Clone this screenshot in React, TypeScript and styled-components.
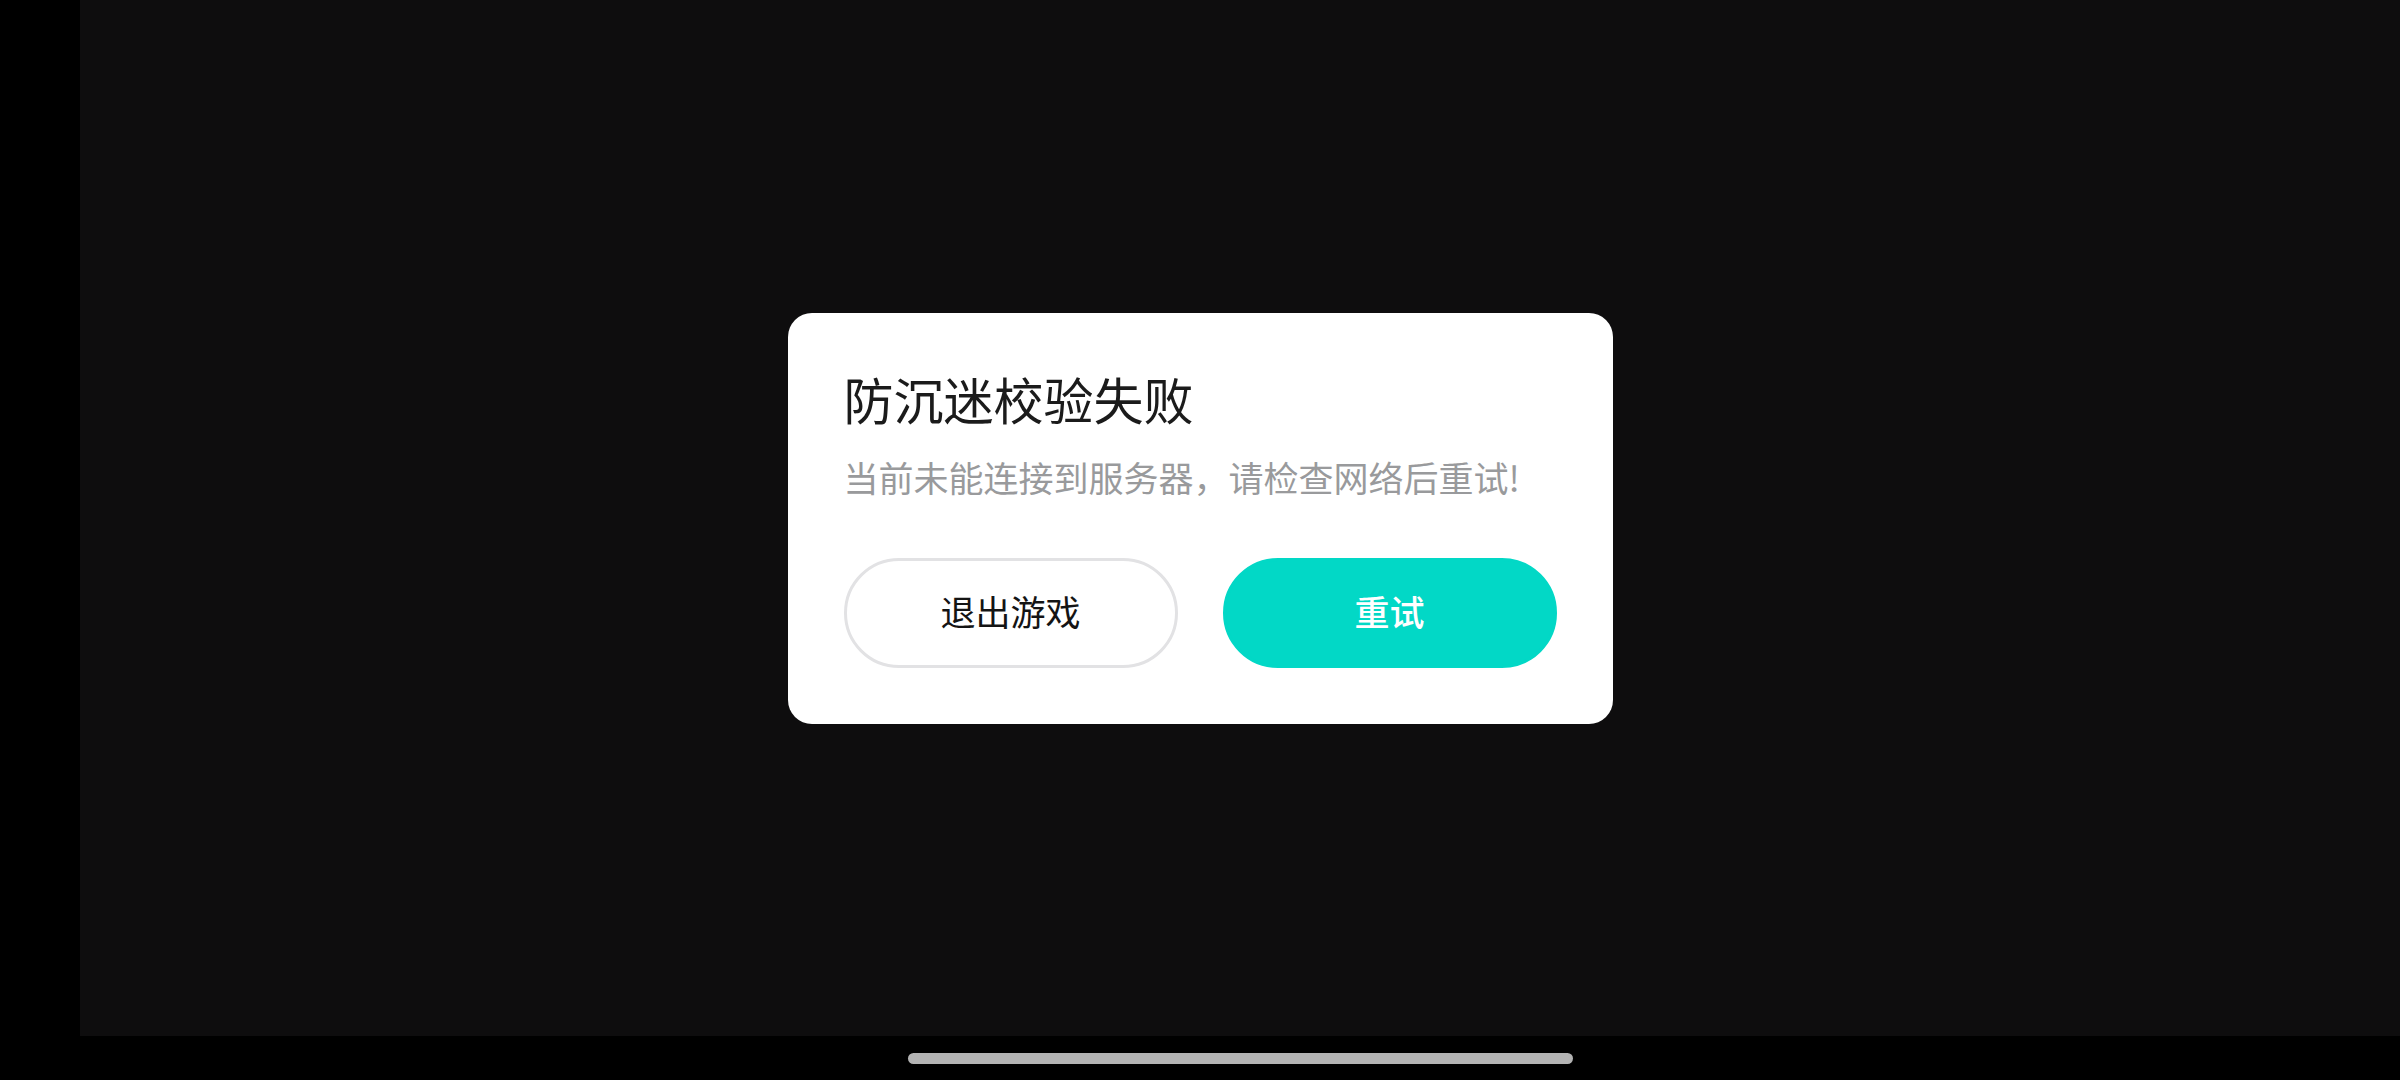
import React from "react";
import styled, { createGlobalStyle } from "styled-components";

const GlobalStyle = createGlobalStyle`
  html, body {
    margin: 0;
    padding: 0;
    background: #000;
    width: 2400px;
    height: 1080px;
    overflow: hidden;
  }
  * { box-sizing: border-box; }
  body {
    font-family: "Noto Sans CJK SC", "Noto Sans", sans-serif;
  }
`;

const Screen = styled.div`
  display: flex;
  width: 2400px;
  height: 1080px;
  background: #000;
`;

const SideInset = styled.div`
  width: 80px;
  flex: none;
  background: #000;
`;

const Main = styled.div`
  flex: 1;
  display: flex;
  flex-direction: column;
`;

const GameArea = styled.div`
  height: 1036px;
  background: #0e0d0e;
`;

const NavBar = styled.div`
  flex: 1;
  display: flex;
  justify-content: center;
  padding-top: 17px;
  background: #000;
`;

const HomeIndicator = styled.div`
  width: 665px;
  height: 11px;
  border-radius: 6px;
  background: #b3b3b3;
`;

const Overlay = styled.div`
  position: fixed;
  left: 0;
  top: 0;
  width: 2400px;
  height: 1036px;
  display: flex;
  align-items: center;
  justify-content: center;
`;

const Dialog = styled.div`
  width: 825px;
  background: #fff;
  border-radius: 24px;
  padding: 55px 56px 56px 56px;
  display: flex;
  flex-direction: column;
`;

const Title = styled.div`
  font-size: 50px;
  line-height: 60px;
  color: #1b1b1b;
  font-weight: 400;
`;

const Message = styled.div`
  margin-top: 25px;
  font-size: 35px;
  line-height: 48px;
  color: #999a9c;
`;

const Actions = styled.div`
  margin-top: 57px;
  display: flex;
  gap: 45px;
`;

const ActionButton = styled.button<{ $primary?: boolean }>`
  flex: 1 1 0;
  min-width: 0;
  height: 110px;
  border-radius: 55px;
  font-family: "Noto Sans CJK SC", "Noto Sans", sans-serif;
  font-size: 35px;
  font-weight: ${(p) => (p.$primary ? 500 : 400)};
  display: flex;
  align-items: center;
  justify-content: center;
  cursor: pointer;
  padding: 0 0 5px 0;
  background: ${(p) => (p.$primary ? "#02d8c6" : "#ffffff")};
  color: ${(p) => (p.$primary ? "#ffffff" : "#141414")};
  border: 3px solid ${(p) => (p.$primary ? "#02d8c6" : "#e2e2e4")};
`;

export default function App() {
  return (
    <>
      <GlobalStyle />
      <Screen>
        <SideInset />
        <Main>
          <GameArea />
          <NavBar>
            <HomeIndicator />
          </NavBar>
        </Main>
      </Screen>
      <Overlay>
        <Dialog>
          <Title>防沉迷校验失败</Title>
          <Message>当前未能连接到服务器，请检查网络后重试!</Message>
          <Actions>
            <ActionButton>退出游戏</ActionButton>
            <ActionButton $primary>重试</ActionButton>
          </Actions>
        </Dialog>
      </Overlay>
    </>
  );
}
